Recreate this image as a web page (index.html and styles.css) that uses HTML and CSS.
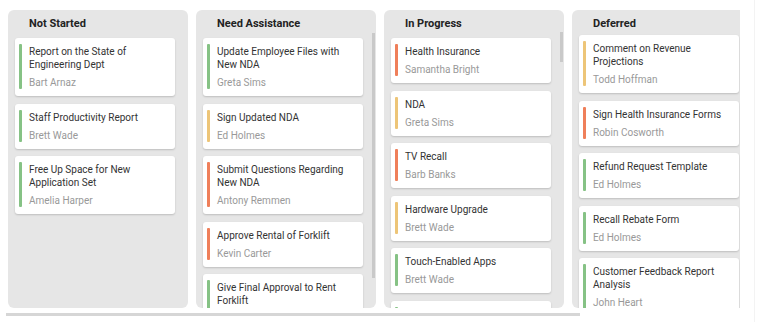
FILE: index.html
```html
<!DOCTYPE html>
<html lang="en">
<head>
    <meta charset="UTF-8">
    <meta name="viewport" content="width=device-width, initial-scale=1.0">
    <title>Kanban Board</title>
    <link rel="stylesheet" href="styles.css">
</head>
<body>
    <div class="page">
        <div class="board-wrap">
            <div class="board">
                <div class="column">
                    <div class="column-header">Not Started</div>
                    <div class="card-list">
                        <div class="card"><span class="bar green"></span><div class="card-body"><div class="title">Report on the State of Engineering Dept</div><div class="assignee">Bart Arnaz</div></div></div>
                        <div class="card"><span class="bar green"></span><div class="card-body"><div class="title">Staff Productivity Report</div><div class="assignee">Brett Wade</div></div></div>
                        <div class="card"><span class="bar green"></span><div class="card-body"><div class="title">Free Up Space for New Application Set</div><div class="assignee">Amelia Harper</div></div></div>
                    </div>
                </div>

                <div class="column">
                    <div class="column-header">Need Assistance</div>
                    <div class="card-list">
                        <div class="card"><span class="bar green"></span><div class="card-body"><div class="title">Update Employee Files with New NDA</div><div class="assignee">Greta Sims</div></div></div>
                        <div class="card"><span class="bar yellow"></span><div class="card-body"><div class="title">Sign Updated NDA</div><div class="assignee">Ed Holmes</div></div></div>
                        <div class="card"><span class="bar orange"></span><div class="card-body"><div class="title">Submit Questions Regarding New NDA</div><div class="assignee">Antony Remmen</div></div></div>
                        <div class="card"><span class="bar orange"></span><div class="card-body"><div class="title">Approve Rental of Forklift</div><div class="assignee">Kevin Carter</div></div></div>
                        <div class="card"><span class="bar green"></span><div class="card-body"><div class="title">Give Final Approval to Rent Forklift</div><div class="assignee">Sandra Johnson</div></div></div>
                    </div>
                    <div class="vscroll vscroll-long"></div>
                </div>

                <div class="column">
                    <div class="column-header">In Progress</div>
                    <div class="card-list">
                        <div class="card"><span class="bar orange"></span><div class="card-body"><div class="title">Health Insurance</div><div class="assignee">Samantha Bright</div></div></div>
                        <div class="card"><span class="bar yellow"></span><div class="card-body"><div class="title">NDA</div><div class="assignee">Greta Sims</div></div></div>
                        <div class="card"><span class="bar orange"></span><div class="card-body"><div class="title">TV Recall</div><div class="assignee">Barb Banks</div></div></div>
                        <div class="card"><span class="bar yellow"></span><div class="card-body"><div class="title">Hardware Upgrade</div><div class="assignee">Brett Wade</div></div></div>
                        <div class="card"><span class="bar green"></span><div class="card-body"><div class="title">Touch-Enabled Apps</div><div class="assignee">Brett Wade</div></div></div>
                        <div class="card"><span class="bar green"></span><div class="card-body"><div class="title">Website Re-Design Plan</div><div class="assignee">Robert Reagan</div></div></div>
                    </div>
                    <div class="vscroll vscroll-short"></div>
                </div>

                <div class="column">
                    <div class="column-header">Deferred</div>
                    <div class="card-list scrolled">
                        <div class="card"><span class="bar yellow"></span><div class="card-body"><div class="title">Comment on Revenue Projections</div><div class="assignee">Todd Hoffman</div></div></div>
                        <div class="card"><span class="bar orange"></span><div class="card-body"><div class="title">Sign Health Insurance Forms</div><div class="assignee">Robin Cosworth</div></div></div>
                        <div class="card"><span class="bar green"></span><div class="card-body"><div class="title">Refund Request Template</div><div class="assignee">Ed Holmes</div></div></div>
                        <div class="card"><span class="bar green"></span><div class="card-body"><div class="title">Recall Rebate Form</div><div class="assignee">Ed Holmes</div></div></div>
                        <div class="card"><span class="bar green"></span><div class="card-body"><div class="title">Customer Feedback Report Analysis</div><div class="assignee">John Heart</div></div></div>
                    </div>
                </div>

                <div class="column">
                    <div class="column-header">Completed</div>
                    <div class="card-list">
                        <div class="card"><span class="bar green"></span><div class="card-body"><div class="title">Prepare 2024 Marketing Plan</div><div class="assignee">Robert Reagan</div></div></div>
                    </div>
                </div>
            </div>
            <div class="hscroll"></div>
        </div>
    </div>
</body>
</html>
```

FILE: styles.css
```css
body {
    font-family: Roboto, "Liberation Sans", sans-serif;
    margin: 0;
    background-color: #fff;
    color: #333;
}
.page {
    width: 754px;
    height: 322px;
    border-right: 1px solid #f3f3f3;
}
.board-wrap {
    width: 734px;
    margin-left: 6px;
    padding-top: 10px;
}
.board {
    display: flex;
    gap: 8px;
    padding-left: 2px;
    overflow: hidden;
}
.column {
    position: relative;
    flex: 0 0 180px;
    height: 298px;
    background-color: #e6e6e6;
    border-radius: 6px;
    overflow: hidden;
}
.column-header {
    height: 28px;
    box-sizing: border-box;
    padding: 6px 0 0 21px;
    font-size: 11px;
    font-weight: bold;
    line-height: 16px;
    color: #222;
}
.card-list {
    padding-left: 7px;
}
.card-list.scrolled {
    margin-top: -3px;
}
.card {
    display: flex;
    width: 160px;
    box-sizing: border-box;
    padding: 6px 12px 7px 4px;
    margin-bottom: 7.5px;
    background: #fff;
    border-radius: 3px;
    box-shadow: 0 1px 2px rgba(0,0,0,0.18);
}
.bar {
    flex: 0 0 3px;
    margin-right: 7px;
    border-radius: 1px;
}
.bar.green {
    background-color: #86c285;
}
.bar.yellow {
    background-color: #edc578;
}
.bar.orange {
    background-color: #ef7f5a;
}
.card-body {
    font-size: 10px;
    line-height: 13px;
    padding-top: 1px;
}
.title {
    color: #333;
}
.assignee {
    margin-top: 5px;
    color: #999;
}
.vscroll {
    position: absolute;
    right: 1px;
    width: 3px;
    background-color: #c9c9c9;
}
.vscroll-long {
    top: 23px;
    height: 245px;
}
.vscroll-short {
    top: 22px;
    height: 30px;
}
.hscroll {
    width: 574px;
    height: 3px;
    margin-top: 5px;
    background-color: #d6d6d6;
}
```
